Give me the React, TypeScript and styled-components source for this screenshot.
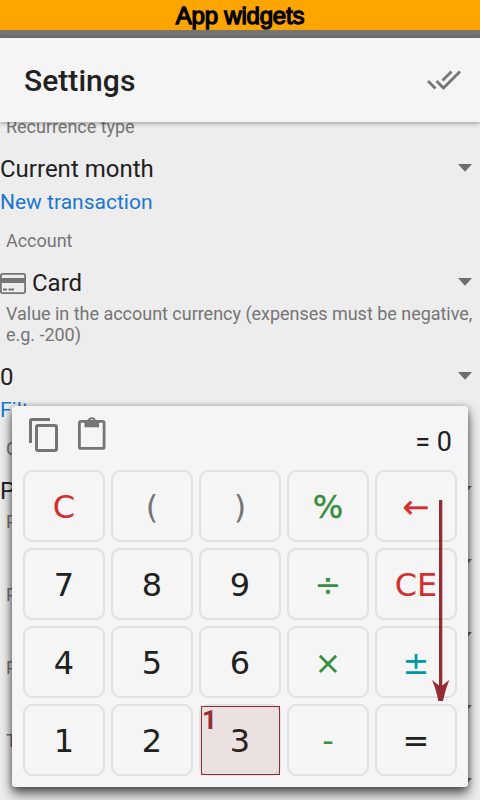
import React from "react";
import styled, { createGlobalStyle } from "styled-components";

const GlobalStyle = createGlobalStyle`
  * { box-sizing: border-box; }
  html, body { margin: 0; padding: 0; overflow: hidden; background: #ededed; }
`;

const Screen = styled.div`
  position: relative;
  display: flex;
  flex-direction: column;
  width: 480px;
  height: 800px;
  overflow: hidden;
  background: #ededed;
  font-family: Roboto, sans-serif;
  color: #212121;
`;

const Banner = styled.div`
  flex: none;
  height: 30px;
  background: #ffa500;
  color: #000;
  font: 400 24px/32px "Liberation Sans", sans-serif;
  -webkit-text-stroke: 1.3px #000;
  letter-spacing: -0.2px;
  text-align: center;
`;

const StatusBar = styled.div`
  flex: none;
  height: 8px;
  background: #757575;
`;

const Header = styled.header`
  flex: none;
  z-index: 1;
  display: flex;
  align-items: center;
  justify-content: space-between;
  height: 84px;
  padding: 0 18px 0 24px;
  background: #f5f5f5;
  box-shadow: 0 1px 5px rgba(0, 0, 0, 0.4);
`;

const Title = styled.h1`
  margin: 2px 0 0;
  font-size: 30px;
  font-weight: 500;
  line-height: 36px;
  letter-spacing: 0.05px;
`;

const List = styled.main`
  flex: 1;
  min-height: 0;
  margin-top: -6px;
  overflow: hidden;
`;

const Label = styled.div<{ $height?: number }>`
  height: ${(p) => p.$height ?? 39}px;
  padding-left: 6px;
  font-size: 18px;
  line-height: 21px;
  letter-spacing: -0.025px;
  color: #757575;
`;

const Value = styled.div`
  display: flex;
  align-items: flex-start;
  justify-content: space-between;
  height: 34px;
  padding-right: 8px;
  font-size: 24px;
  line-height: 28px;
`;

const ValueText = styled.span`
  display: flex;
  align-items: center;
  gap: 6px;
`;

const Caret = styled.svg`
  margin-top: 9px;
`;

const Section = styled.div`
  height: 41px;
  font-size: 21px;
  line-height: 27px;
  color: #1976d2;
`;

const Calculator = styled.section`
  position: absolute;
  z-index: 2;
  left: 12px;
  top: 406px;
  width: 456px;
  height: 381px;
  padding: 0 11px;
  border-radius: 3px;
  background: #f5f5f5;
  box-shadow: 0 7px 12px rgba(0, 0, 0, 0.6), 0 1px 6px rgba(0, 0, 0, 0.35);
`;

const Toolbar = styled.div`
  display: flex;
  align-items: flex-start;
  height: 64px;
  padding: 10px 5px 0;
`;

const Tool = styled.svg`
  margin-right: 12px;
`;

const Result = styled.output`
  margin: 10px 0 0 auto;
  font-size: 27px;
  line-height: 32px;
`;

const Keys = styled.div`
  display: grid;
  grid-template-columns: repeat(5, 82px);
  grid-auto-rows: 72px;
  gap: 6px;
`;

const Key = styled.button<{ $color?: string; $heavy?: boolean }>`
  position: relative;
  display: flex;
  align-items: center;
  justify-content: center;
  padding: 1px 0 0;
  border: 2px solid #e0e0e0;
  border-radius: 9px;
  background: #f5f5f5;
  color: ${(p) => p.$color ?? "#212121"};
  font: 400 32px/38px "DejaVu Sans", sans-serif;
  -webkit-text-stroke: ${(p) => (p.$heavy ? "0.4px" : "0")};
`;

const Highlight = styled.span`
  position: absolute;
  left: 0;
  top: 0;
  width: 79px;
  height: 69px;
  border: 1px solid #942d31;
  background: rgba(148, 45, 49, 0.1);
  color: #942d31;
  font: 700 26px/27px Roboto, sans-serif;
  text-align: left;
`;

const Arrow = styled.svg`
  position: absolute;
  z-index: 3;
  left: 430px;
  top: 500px;
`;

const RED = "#d32f2f";
const GRAY = "#757575";
const GREEN = "#388e3c";
const TEAL = "#0097a7";

const keys: [string, string?][] = [
  ["C", RED], ["(", GRAY], [")", GRAY], ["%", GREEN], ["←", RED],
  ["7"], ["8"], ["9"], ["÷", GREEN], ["CE", RED],
  ["4"], ["5"], ["6"], ["×", GREEN], ["±", TEAL],
  ["1"], ["2"], ["3"], ["-", GREEN], ["="],
];

const DropDown = () => (
  <Caret width="14" height="8" viewBox="0 0 14 8">
    <path d="M0 0h14L7 7.8z" fill="#6e6e6e" />
  </Caret>
);

const CardIcon = () => (
  <svg width="26" height="21" viewBox="0 0 26 21" fill="none" stroke="#757575">
    <rect x="0.9" y="0.9" width="24.2" height="19.2" rx="1.5" strokeWidth="1.8" />
    <path d="M0 7.5h26" strokeWidth="5" />
    <path d="M3 16.5h4M8.5 16.5h5.5" strokeWidth="2" />
  </svg>
);

// Rows whose value column is empty, shown by the first letter of their label.
const emptyFields = ["P", "P", "P", "T"];

export default function App() {
  return (
    <>
      <GlobalStyle />
      <Screen>
        <Banner>App widgets</Banner>
        <StatusBar />
        <Header>
          <Title>Settings</Title>
          <svg width="36" height="22" viewBox="0 0 36 22" fill="none" stroke="#757575" strokeWidth="2.8">
            <path d="M2 12l7.5 7.5M10.5 12l7 7L34 2.5M16.5 11.5L25.5 2.5" />
          </svg>
        </Header>
        <List>
          <Label>Recurrence type</Label>
          <Value>
            <ValueText>Current month</ValueText>
            <DropDown />
          </Value>
          <Section>New transaction</Section>
          <Label>Account</Label>
          <Value>
            <ValueText><CardIcon />Card</ValueText>
            <DropDown />
          </Value>
          <Label $height={60}>Value in the account currency (expenses must be negative, e.g. -200)</Label>
          <Value>
            <ValueText>0</ValueText>
            <DropDown />
          </Value>
          <Section>Filter</Section>
          <Label>C</Label>
          <Value>
            <ValueText>P</ValueText>
            <DropDown />
          </Value>
          {emptyFields.map((name, index) => (
            <React.Fragment key={index}>
              <Label>{name}</Label>
              <Value>
                <ValueText />
                <DropDown />
              </Value>
            </React.Fragment>
          ))}
        </List>
        <Calculator>
          <Toolbar>
            <Tool width="36" height="38" viewBox="0 0 36 38" fill="none" stroke="#757575" strokeWidth="3">
              <path d="M2.5 27V5a1.5 1.5 0 0 1 1.5-1.5h18" />
              <rect x="8.5" y="9.5" width="20" height="25" rx="1.5" />
            </Tool>
            <Tool width="32" height="38" viewBox="0 0 32 38" fill="none" stroke="#757575" strokeWidth="2.8">
              <rect x="3.4" y="5.4" width="24.7" height="27" rx="1.5" />
              <path
                d="M8.5 4.5h3.1a4.3 4.3 0 0 1 8.3 0H23V11.3H8.5zM15.75 2.9a1.5 1.5 0 1 0 .01 3A1.5 1.5 0 0 0 15.75 2.9z"
                fill="#757575"
                fillRule="evenodd"
                stroke="none"
              />
            </Tool>
            <Result>= 0</Result>
          </Toolbar>
          <Keys>
            {keys.map(([text, color]) => (
              <Key key={text} $color={color} $heavy={text === "←" || text === "%"}>
                {text}
                {text === "3" && <Highlight>1</Highlight>}
              </Key>
            ))}
          </Keys>
        </Calculator>
        <Arrow width="20" height="202" viewBox="0 0 20 202" fill="#942d31">
          <path d="M9 0h3.3v185.5L19.3 180Q15.5 189 13 201H8.3Q6 189 2 180l7 5.5z" />
        </Arrow>
      </Screen>
    </>
  );
}
